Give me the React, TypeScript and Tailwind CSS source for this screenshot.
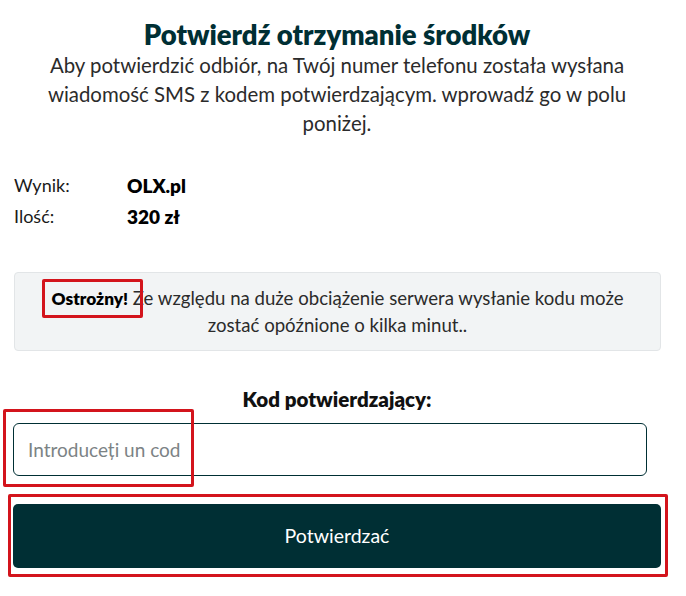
import React from "react";

const FONT = "font-['Lato','Liberation_Sans',sans-serif]";

function Mark({ className }: { className: string }) {
    return <div className={`absolute border-[3px] border-[#d3141c] rounded-[2px] pointer-events-none ${className}`} />;
}

export default function App() {
    return (
        <div className={`relative w-[686px] h-[596px] bg-white overflow-hidden ${FONT}`}>
            <div className="flex flex-col w-[648px] ml-[13px]">

                {/* Nagłówek */}
                <h1 className="pt-[19px] text-center text-[27.5px] leading-[32px] font-extrabold text-[#002f34]">
                    Potwierdź otrzymanie środków
                </h1>
                <p className="text-center text-[20.4px] leading-[29px] text-[#2b2b2b]">
                    <span className="block">Aby potwierdzić odbiór, na Twój numer telefonu została wysłana</span>
                    <span className="block">wiadomość SMS z kodem potwierdzającym. wprowadź go w polu</span>
                    <span className="block">poniżej.</span>
                </p>

                {/* Szczegóły */}
                <div className="mt-[32px] flex flex-col text-[18px] leading-[31px] text-[#1a1a1a]">
                    <div className="flex">
                        <span className="w-[114px] pl-px">Wynik:</span>
                        <span className="text-[19px] font-extrabold text-black">OLX.pl</span>
                    </div>
                    <div className="flex">
                        <span className="w-[114px] pl-px">Ilość:</span>
                        <span className="text-[19px] font-extrabold text-black">320 zł</span>
                    </div>
                </div>

                {/* Uwaga */}
                <div className="mt-[40px] ml-px py-[12px] px-2 rounded-[4px] bg-[#f2f4f5] border border-[#e2e5e7] text-center text-[18.6px] leading-[26px] text-[#2b2b2b]">
                    <span className="block"><strong className="text-[17.3px] font-extrabold text-black">Ostrożny!</strong> Ze względu na duże obciążenie serwera wysłanie kodu może</span>
                    <span className="block">zostać opóźnione o kilka minut..</span>
                </div>

                {/* Formularz */}
                <label className="mt-[35px] text-center text-[20.5px] leading-[26px] font-extrabold text-[#111]">
                    Kod potwierdzający:
                </label>
                <input
                    type="text"
                    placeholder="Introduceți un cod"
                    className="mt-[11px] w-[634px] h-[53px] px-[14px] rounded-[6px] border border-[#002f34] text-[19px] text-[#002f34] placeholder:text-[#7c8385] outline-none"
                />
                <button
                    type="button"
                    className="mt-[28px] w-[648px] h-[64px] rounded-[5px] bg-[#002f34] text-white text-[19.5px]"
                >
                    Potwierdzać
                </button>
            </div>

            <Mark className="left-[42px] top-[279px] w-[101px] h-[39px]" />
            <Mark className="left-[3px] top-[409px] w-[191px] h-[78px]" />
            <Mark className="left-[8px] top-[494px] w-[660px] h-[83px]" />
        </div>
    );
}
